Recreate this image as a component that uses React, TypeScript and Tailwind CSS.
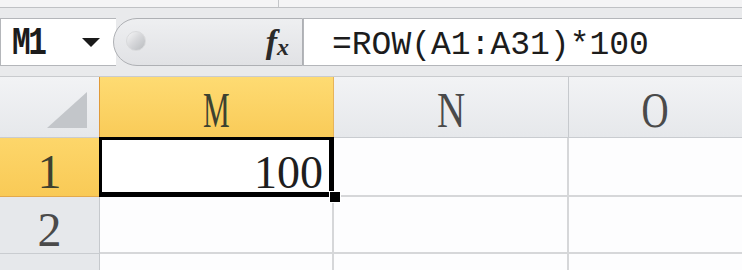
import React from "react";

const mono = { fontFamily: '"Liberation Mono", "DejaVu Sans Mono", monospace' };
const serif = { fontFamily: '"Liberation Serif", "DejaVu Serif", serif' };

function HeaderCell({
  label,
  active,
  scale,
  last,
}: {
  label: string;
  active?: boolean;
  scale: string;
  last?: boolean;
}) {
  return (
    <div
      className={
        "flex items-center justify-center border-b " +
        (last ? "" : "border-r ") +
        (active
          ? "bg-gradient-to-b from-[#fedb72] to-[#f9cb58] border-b-[#e0a040] border-r-[#e7b45a]"
          : "bg-gradient-to-b from-[#f2f3f5] to-[#e6e8eb] border-b-[#c9ccd0] border-r-[#c6c9cd]")
      }
    >
      <span
        className={"text-[50px] leading-none pt-[6px] inline-block " + scale + (active ? " text-[#3c4230]" : " text-[#4a4a4a]")}
        style={serif}
      >
        {label}
      </span>
    </div>
  );
}

function RowHeader({ n, active }: { n: number; active?: boolean }) {
  return (
    <div
      className={
        "flex items-center justify-center border-r border-b " +
        (active
          ? "bg-gradient-to-b from-[#fdd66a] to-[#f9ca56] border-r-[#e09a38] border-b-[#e3a94c]"
          : "bg-[#e6e8eb] border-r-[#c6c9cd] border-b-[#c9ccd0]")
      }
    >
      <span
        className={"text-[48px] leading-none pt-[10px] " + (active ? "text-[#3e402e]" : "text-[#4a4a4a]")}
        style={serif}
      >
        {n}
      </span>
    </div>
  );
}

function Cell({ last, bottom }: { last?: boolean; bottom?: boolean }) {
  return (
    <div
      className={
        "bg-[#fdfdfe] border-[#d6d7d9] " + (bottom ? "" : "border-b-2 ") + (last ? "" : "border-r-2")
      }
    />
  );
}

export default function App() {
  return (
    <div className="w-[742px] h-[270px] overflow-hidden bg-white flex flex-col select-none">
      {/* ribbon remnant */}
      <div className="h-[8px] flex bg-[#f4f4f5] border-b border-[#bfc1c4]">
        <div className="w-[279px] border-r border-[#c4c6c9]" />
        <div className="flex-1" />
      </div>
      <div className="h-[10px] bg-[#e9eaec]" />

      {/* formula bar */}
      <div className="h-[48px] flex bg-[#e9eaec]">
        <div className="w-[116px] bg-white border-y border-l border-[#b4b6ba] flex items-center pl-[11px] pr-[16px] justify-between">
          <span
            className="text-[39px] font-bold leading-none text-[#1c1c1c] inline-block scale-x-[0.8] origin-left tracking-[-3px] pt-[4px]"
            style={mono}
          >
            M1
          </span>
          <svg width="18" height="10" viewBox="0 0 18 10" className="mt-[2px]">
            <path d="M0 0 L18 0 L9 9 Z" fill="#1a1a1a" />
          </svg>
        </div>
        <div className="w-[190px] -ml-[3px] rounded-l-[24px] border border-[#aeb0b4] bg-gradient-to-b from-[#eeeff1] to-[#e1e2e5] flex items-center justify-between pl-[12px] pr-[12px]">
          <div className="w-[20px] h-[20px] rounded-full bg-gradient-to-br from-[#f7f7f8] via-[#d5d6d9] to-[#b9bbbf] border border-[#d9dadc] -mt-[3px]" />
          <span className="leading-none text-[#2a2a2a] font-bold italic flex items-end pr-[1px]" style={serif}>
            <span className="text-[34px]">f</span>
            <span className="text-[24px]">x</span>
          </span>
        </div>
        <div className="flex-1 bg-white border-y border-l border-[#b4b6ba] flex items-center pl-[28px] pt-[6px]">
          <span className="text-[33px] leading-none text-[#1c1c1c]" style={mono}>
            =ROW(A1:A31)*100
          </span>
        </div>
      </div>
      <div className="h-[11px] bg-[#e9eaec] border-b border-[#c9cbce]" />

      {/* grid */}
      <div className="flex-1 grid grid-cols-[100px_234px_235px_1fr] grid-rows-[61px_59px_57px_1fr]">
        <div className="bg-gradient-to-b from-[#f2f3f5] to-[#e6e8eb] border-r border-b border-r-[#e09a38] border-b-[#c9ccd0] flex items-end justify-end pr-[12px] pb-[9px]">
          <svg width="40" height="36" viewBox="0 0 40 36">
            <path d="M40 0 L40 36 L0 36 Z" fill="#c3c6ca" />
          </svg>
        </div>
        <HeaderCell label="M" active scale="scale-x-[0.6]" />
        <HeaderCell label="N" scale="scale-x-[0.78]" />
        <HeaderCell label="O" scale="scale-x-[0.75]" last />

        <RowHeader n={1} active />
        <div className="relative bg-white flex items-center justify-end pr-[11px]">
          <span className="text-[46px] leading-none pt-[10px] text-[#1e1e1e]" style={serif}>
            100
          </span>
          <div className="absolute -left-[1px] -top-[1px] right-0 bottom-0 border-[3px] border-r-[5px] border-b-[5px] border-black" />
          <div className="absolute -right-[7px] -bottom-[6px] w-[12px] h-[12px] bg-black border border-white" />
        </div>
        <Cell />
        <Cell last />

        <RowHeader n={2} />
        <Cell />
        <Cell />
        <Cell last />

        <div className="bg-[#e6e8eb] border-r border-[#c6c9cd]" />
        <Cell bottom />
        <Cell bottom />
        <Cell last bottom />
      </div>
    </div>
  );
}
